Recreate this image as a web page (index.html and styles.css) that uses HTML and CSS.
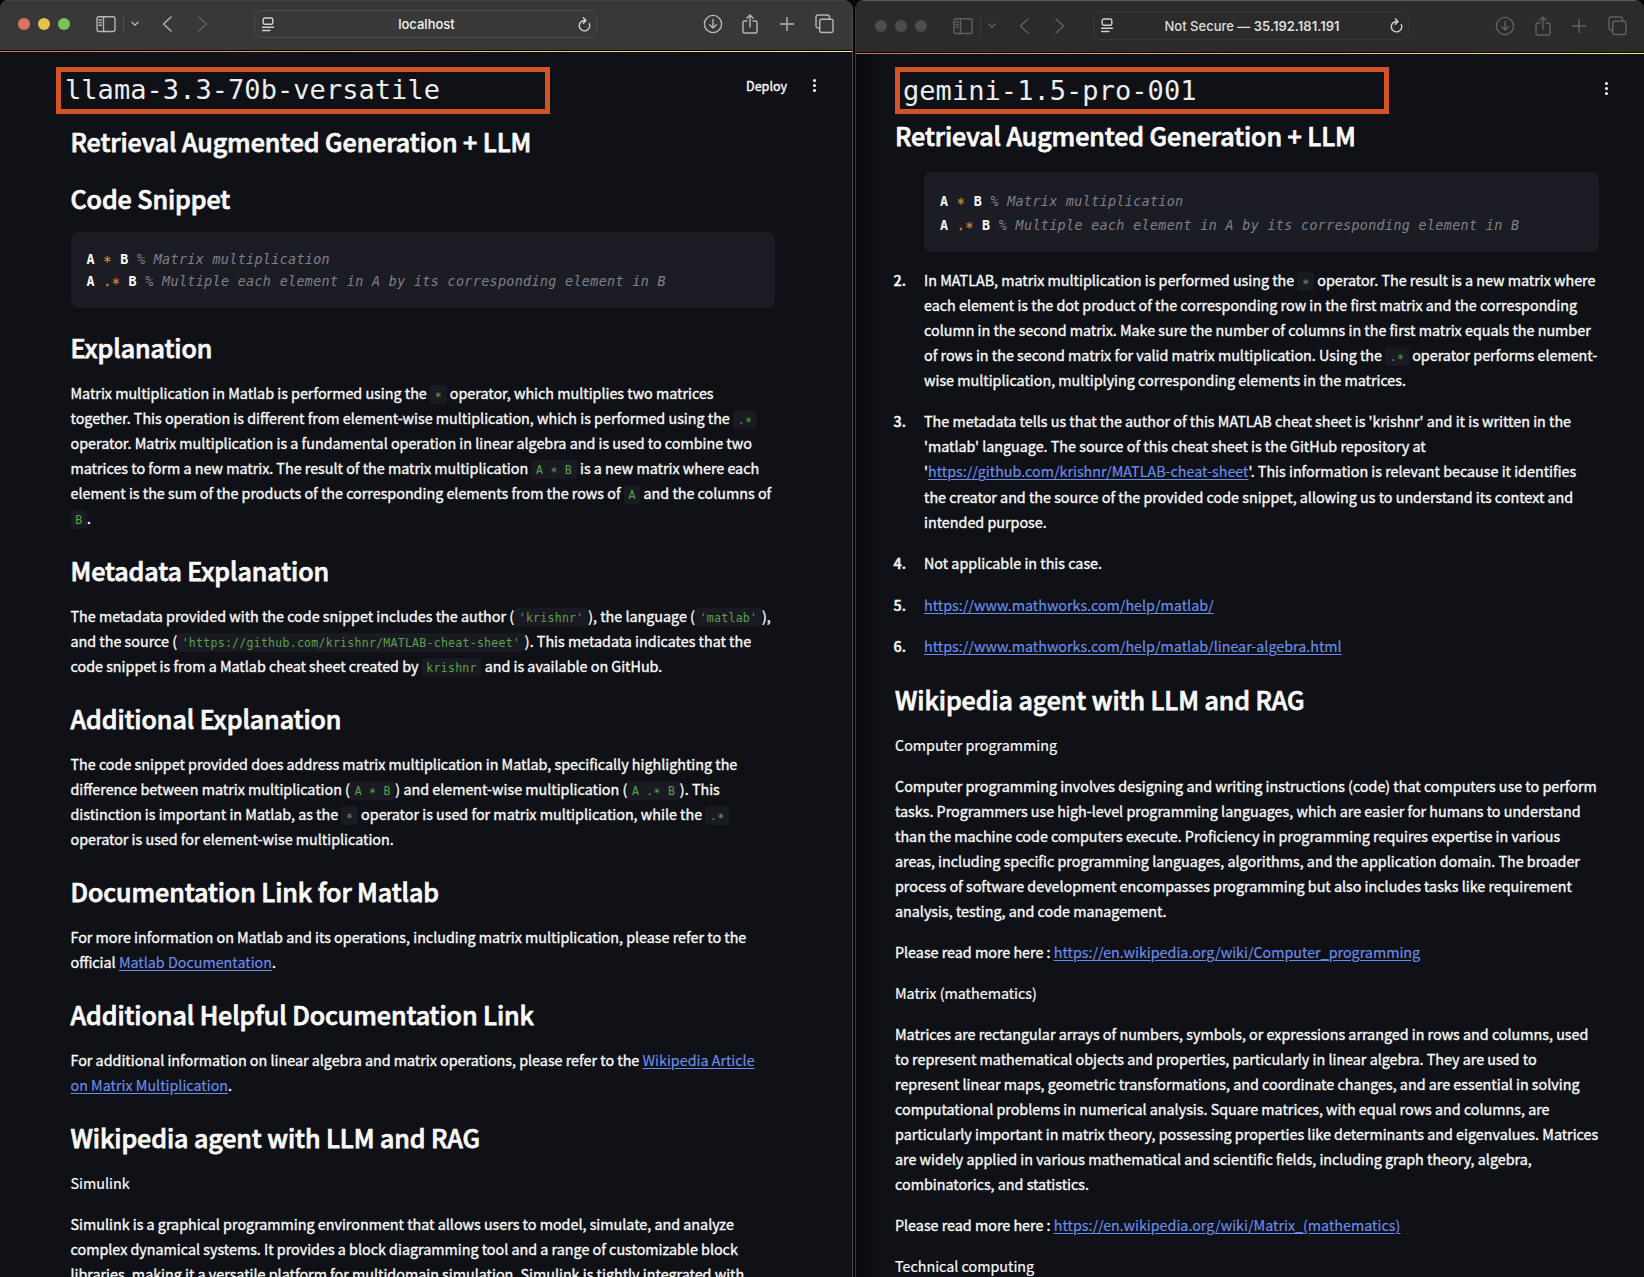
FILE: index.html
```html
<!DOCTYPE html>
<html lang="en">
<head>
<meta charset="utf-8">
<title>Model comparison</title>
<link rel="stylesheet" href="styles.css">
</head>
<body>
<svg class="defs" width="0" height="0" aria-hidden="true">
  <symbol id="sidebar" viewBox="0 0 20 18"><rect x="1" y="1.7" width="18" height="14.8" rx="2"/><path d="M7.5 1.7v14.8M3 5h2.4M3 7.6h2.4M3 10.2h2.4"/></symbol>
  <symbol id="chev" viewBox="0 0 8 6"><path d="M1 1.2l3 3 3-3"/></symbol>
  <symbol id="back" viewBox="0 0 10 16"><path d="M9 1L1.5 8 9 15"/></symbol>
  <symbol id="fwd" viewBox="0 0 10 16"><path d="M1 1l7.500 7L1 15"/></symbol>
  <symbol id="reader" viewBox="0 0 12 15"><rect x="1.200" y="1" width="9.600" height="6.200" rx="1.500"/><path d="M.5 10.300h11M.5 13.500h7.500"/></symbol>
  <symbol id="reload" viewBox="0 0 13 15"><path d="M11.300 6.700A5.200 5.200 0 1 1 6.500 3.500h1.200M5.300 .8l2.700 2.700-2.700 2.700"/></symbol>
  <symbol id="download" viewBox="0 0 20 20"><circle cx="10" cy="10" r="8.600"/><path d="M10 5.500v8.500M6.700 10.800L10 14l3.300-3.200"/></symbol>
  <symbol id="share" viewBox="0 0 16 20"><path d="M5 7H2.500A1.500 1.500 0 0 0 1 8.500v9A1.500 1.500 0 0 0 2.500 19h11a1.500 1.500 0 0 0 1.500-1.500v-9A1.500 1.500 0 0 0 13.500 7H11M8 13V1.200M4.900 4.200L8 1.100l3.100 3.100"/></symbol>
  <symbol id="plus" viewBox="0 0 14 14"><path d="M7 0v14M0 7h14"/></symbol>
  <symbol id="tabs" viewBox="0 0 19 20"><path d="M4.700 14H3a2 2 0 0 1-2-2V3a2 2 0 0 1 2-2h9.500a2 2 0 0 1 2 2v1.800"/><rect x="4.700" y="5.200" width="13.300" height="13.300" rx="2"/></symbol>
</svg>
<main class="desktop">
  <section class="window window-front">
    <header class="toolbar">
      <div class="lights"><i class="red"></i><i class="yellow"></i><i class="green"></i></div>
      <svg class="i-sidebar"><use href="#sidebar"/></svg>
      <span class="sep"></span>
      <svg class="i-chev"><use href="#chev"/></svg>
      <svg class="i-back"><use href="#back"/></svg>
      <svg class="i-fwd"><use href="#fwd"/></svg>
      <div class="address"><svg class="i-reader"><use href="#reader"/></svg><span class="host">localhost</span><svg class="i-reload"><use href="#reload"/></svg></div>
      <div class="actions">
        <svg class="i-download"><use href="#download"/></svg>
        <svg class="i-share"><use href="#share"/></svg>
        <svg class="i-plus"><use href="#plus"/></svg>
        <svg class="i-tabs"><use href="#tabs"/></svg>
      </div>
    </header>
    <div class="decoration"></div>
    <div class="page">
      <div class="label">llama-3.3-70b-versatile</div>
      <div class="app-bar"><span>Deploy</span><span class="kebab"><i></i><i></i><i></i></span></div>
      <h2>Retrieval Augmented Generation + LLM</h2>
      <h2>Code Snippet</h2>
      <pre class="code"><b>A</b> <em><i>*</i></em> <b>B</b><span> % Matrix multiplication</span>
<b>A</b> <em>.<i>*</i></em> <b>B</b><span> % Multiple each element in A by its corresponding element in B</span></pre>
      <h2>Explanation</h2>
      <p>Matrix multiplication in Matlab is performed using the <code><i>*</i></code> operator, which multiplies two matrices<br>together. This operation is different from element-wise multiplication, which is performed using the <code>.<i>*</i></code><br>operator. Matrix multiplication is a fundamental operation in linear algebra and is used to combine two<br>matrices to form a new matrix. The result of the matrix multiplication <code>A <i>*</i> B</code> is a new matrix where each<br>element is the sum of the products of the corresponding elements from the rows of <code>A</code> and the columns of<br><code>B</code>.</p>
      <h2>Metadata Explanation</h2>
      <p>The metadata provided with the code snippet includes the author (<code>'krishnr'</code>), the language (<code>'matlab'</code>),<br>and the source (<code>'https://github.com/krishnr/MATLAB-cheat-sheet'</code>). This metadata indicates that the<br>code snippet is from a Matlab cheat sheet created by <code>krishnr</code> and is available on GitHub.</p>
      <h2>Additional Explanation</h2>
      <p>The code snippet provided does address matrix multiplication in Matlab, specifically highlighting the<br>difference between matrix multiplication (<code>A <i>*</i> B</code>) and element-wise multiplication (<code>A .<i>*</i> B</code>). This<br>distinction is important in Matlab, as the <code><i>*</i></code> operator is used for matrix multiplication, while the <code>.<i>*</i></code><br>operator is used for element-wise multiplication.</p>
      <h2>Documentation Link for Matlab</h2>
      <p>For more information on Matlab and its operations, including matrix multiplication, please refer to the<br>official <a>Matlab Documentation</a>.</p>
      <h2>Additional Helpful Documentation Link</h2>
      <p>For additional information on linear algebra and matrix operations, please refer to the <a>Wikipedia Article<br>on Matrix Multiplication</a>.</p>
      <h2>Wikipedia agent with LLM and RAG</h2>
      <p class="topic">Simulink</p>
      <p>Simulink is a graphical programming environment that allows users to model, simulate, and analyze<br>complex dynamical systems. It provides a block diagramming tool and a range of customizable block<br>libraries, making it a versatile platform for multidomain simulation. Simulink is tightly integrated with</p>
    </div>
  </section>
  <section class="window window-back">
    <header class="toolbar">
      <div class="lights"><i></i><i></i><i></i></div>
      <svg class="i-sidebar"><use href="#sidebar"/></svg>
      <span class="sep"></span>
      <svg class="i-chev"><use href="#chev"/></svg>
      <svg class="i-back"><use href="#back"/></svg>
      <svg class="i-fwd"><use href="#fwd"/></svg>
      <div class="address"><svg class="i-reader"><use href="#reader"/></svg><span class="host">Not Secure — <b>35.192.181.191</b></span><svg class="i-reload"><use href="#reload"/></svg></div>
      <div class="actions">
        <svg class="i-download"><use href="#download"/></svg>
        <svg class="i-share"><use href="#share"/></svg>
        <svg class="i-plus"><use href="#plus"/></svg>
        <svg class="i-tabs"><use href="#tabs"/></svg>
      </div>
    </header>
    <div class="decoration"></div>
    <div class="page">
      <div class="label">gemini-1.5-pro-001</div>
      <div class="app-bar"><span class="kebab"><i></i><i></i><i></i></span></div>
      <h2>Retrieval Augmented Generation + LLM</h2>
      <pre class="code"><b>A</b> <em><i>*</i></em> <b>B</b><span> % Matrix multiplication</span>
<b>A</b> <em>.<i>*</i></em> <b>B</b><span> % Multiple each element in A by its corresponding element in B</span></pre>
      <ol>
        <li><span class="num">2.</span><p>In MATLAB, matrix multiplication is performed using the <code><i>*</i></code> operator. The result is a new matrix where<br>each element is the dot product of the corresponding row in the first matrix and the corresponding<br>column in the second matrix. Make sure the number of columns in the first matrix equals the number<br>of rows in the second matrix for valid matrix multiplication. Using the <code>.<i>*</i></code> operator performs element-<br>wise multiplication, multiplying corresponding elements in the matrices.</p></li>
        <li class="loose"><span class="num">3.</span><p>The metadata tells us that the author of this MATLAB cheat sheet is 'krishnr' and it is written in the<br>'matlab' language. The source of this cheat sheet is the GitHub repository at<br>'<a>https://github.com/krishnr/MATLAB-cheat-sheet</a>'. This information is relevant because it identifies<br>the creator and the source of the provided code snippet, allowing us to understand its context and<br>intended purpose.</p></li>
        <li><span class="num">4.</span><p>Not applicable in this case.</p></li>
        <li class="spaced"><span class="num">5.</span><p><a>https://www.mathworks.com/help/matlab/</a></p></li>
        <li><span class="num">6.</span><p><a>https://www.mathworks.com/help/matlab/linear-algebra.html</a></p></li>
      </ol>
      <h2>Wikipedia agent with LLM and RAG</h2>
      <p class="topic">Computer programming</p>
      <p>Computer programming involves designing and writing instructions (code) that computers use to perform<br>tasks. Programmers use high-level programming languages, which are easier for humans to understand<br>than the machine code computers execute. Proficiency in programming requires expertise in various<br>areas, including specific programming languages, algorithms, and the application domain. The broader<br>process of software development encompasses programming but also includes tasks like requirement<br>analysis, testing, and code management.</p>
      <p>Please read more here : <a>https://en.wikipedia.org/wiki/Computer_programming</a></p>
      <p class="topic">Matrix (mathematics)</p>
      <p>Matrices are rectangular arrays of numbers, symbols, or expressions arranged in rows and columns, used<br>to represent mathematical objects and properties, particularly in linear algebra. They are used to<br>represent linear maps, geometric transformations, and coordinate changes, and are essential in solving<br>computational problems in numerical analysis. Square matrices, with equal rows and columns, are<br>particularly important in matrix theory, possessing properties like determinants and eigenvalues. Matrices<br>are widely applied in various mathematical and scientific fields, including graph theory, algebra,<br>combinatorics, and statistics.</p>
      <p>Please read more here : <a>https://en.wikipedia.org/wiki/Matrix_(mathematics)</a></p>
      <p class="topic">Technical computing</p>
    </div>
  </section>
</main>
</body>
</html>
```

FILE: styles.css
```css
* { box-sizing: border-box; }
html, body { margin: 0; height: 100%; overflow: hidden; background: #050506; }
.defs { position: absolute; }
.desktop { display: flex; gap: 2px; height: 1277px; width: 1644px; overflow: hidden; background: #060607; }

.window { overflow: hidden; background: #0f1116; height: 1277px; flex: none; }
.window-front { width: 853px; border-right: 1px solid #4c4c4d; border-radius: 8px 9px 0 0; }
.window-back { width: 789px; border-left: 1px solid #37383a; border-radius: 9px 9px 0 0; border-top: 1px solid #5a5c5c; }

.toolbar { display: flex; align-items: center; color: #b5b5b5; }
.window-front .toolbar { height: 50px; padding: 0 18px 3px 18px; background: #383838; border-top: 1px solid #444; }
.window-back .toolbar { height: 51px; padding: 0 17.500px 2px 19px; background: #2b2b2b; color: #606060; }
.toolbar svg { flex: none; fill: none; stroke: currentColor; stroke-width: 1.4; stroke-linecap: round; stroke-linejoin: round; }
.lights { display: flex; gap: 8px; }
.lights i { width: 12px; height: 12px; border-radius: 50%; background: #4d4d4d; }
.lights .red { background: #da735d; }
.lights .yellow { background: #e7c14f; }
.lights .green { background: #79c257; }
.i-sidebar { width: 20px; height: 18px; margin-left: 25.5px; }
.sep { width: 1px; height: 18px; margin-left: 7.5px; background: #4f4f4f; }
.window-back .sep { background: #3d3d3d; }
.i-chev { width: 8px; height: 6px; margin-left: 6.500px; }
.i-back { width: 10px; height: 16px; margin-left: 23.5px; }
.i-fwd { width: 10px; height: 16px; margin-left: 26px; }
.window-front .i-fwd { color: #636363; }
.address { display: flex; align-items: center; height: 28px; padding: 0 5px 0 7px; border: 1px solid #4c4c4c; border-radius: 8px; color: #d0d0d0; }
.window-front .address { width: 343px; margin-left: 46px; }
.window-back .address { width: 316px; margin-left: 28px; border-color: #373737; }
.i-reader { width: 12px; height: 15px; }
.i-reload { width: 13px; height: 15px; }
.host { flex: 1; text-align: center; font: 500 13px/26px Inter, sans-serif; color: #f4f4f4; white-space: nowrap; padding-left: 1px; }
.host b { font-weight: 600; }
.window-back .host { color: #dedede; }
.actions { display: flex; align-items: center; margin-left: auto; }
.i-download { width: 20px; height: 20px; }
.i-share { width: 16px; height: 20px; margin-left: 19.500px; }
.i-plus { width: 14px; height: 14px; margin-left: 21.500px; }
.i-tabs { width: 19px; height: 20px; margin-left: 21.500px; }

.decoration { height: 2px; border-top: 1px solid #000; background: linear-gradient(90deg, #d4705c, #e8b070 45%, #f3ef8d) content-box; }

.page { position: relative; color: #fafafa; font-family: "Noto Sans CJK SC", "Noto Sans CJK JP", sans-serif; font-size: 14.32px; font-weight: 400; line-height: 25px; white-space: nowrap; }
.window-front .page { padding: 72px 77px 0 70.5px; }
.window-back .page { height: 1224px; padding: 64px 45px 0 39px; background: linear-gradient(90deg, #0a0b0e, #0f1116 28px); }
.label { position: absolute; border: 5px solid #d15424; color: #eee; font: 27px/37px "DejaVu Sans Mono", monospace; letter-spacing: .05px; width: 494px; height: 47px; }
.window-front .label { left: 56px; top: 15px; padding-left: 4px; line-height: 36px; }
.window-back .label { left: 39px; top: 13px; padding-left: 3px; }
.app-bar { position: absolute; display: flex; align-items: center; font-size: 12.530px; -webkit-text-stroke: .35px; }
.window-front .app-bar { right: 36px; top: 21px; gap: 26px; }
.window-back .app-bar { right: 36px; top: 22px; height: 25px; }
.kebab { display: flex; flex-direction: column; gap: 2px; }
.kebab i { width: 3px; height: 3px; border-radius: 50%; background: #fafafa; }

h2 { margin: 23px 0 0; font-size: 25.05px; line-height: 34px; font-weight: 500; letter-spacing: -.08px; -webkit-text-stroke: .75px; }
.label + .app-bar + h2 { margin-top: 0; }
p { margin: 16px 0 0; -webkit-text-stroke: .35px; }
a { color: #6c8eec; text-decoration: underline; text-underline-offset: 2px; -webkit-text-stroke: .15px; }
.topic { -webkit-text-stroke: .2px; }
code { display: inline-block; height: 19px; padding: 3px 4.700px 0; border-radius: 3px; background: #1a1b22; color: #5ba148; font: 400 11.5px/15px "DejaVu Sans Mono", monospace; letter-spacing: .277px; -webkit-text-stroke: 0; }
.code { margin: 17px 0 0; padding: 17px 16px 0; border-radius: 8px; background: #1b1c24; font: 400 13.4px/22px "DejaVu Sans Mono", monospace; letter-spacing: .333px; height: 76px; }
.code b { font-weight: 700; }
.code em { color: #d08030; font-style: normal; -webkit-text-stroke: .3px; }
.code i, code i { font-style: normal; vertical-align: -2px; line-height: 0; }
.code span { color: #80808a; font-style: italic; }
.code + h2 { margin-top: 22px; }
.window-back .code { margin: 20px 0 0 29px; padding-top: 18px; height: 80px; line-height: 24px; }
ol { list-style: none; margin: 15px 0 0; padding: 0; }
li { display: flex; margin-top: 16px; }
li:first-child { margin-top: 0; }
li p { margin: 0; }
.loose p { line-height: 25.2px; }
.spaced { margin-top: 17px; }
ol + h2 { margin-top: 24px; }
.num { flex: none; width: 30.500px; margin-left: -1.500px; font-weight: 500; -webkit-text-stroke: .4px; }
```
